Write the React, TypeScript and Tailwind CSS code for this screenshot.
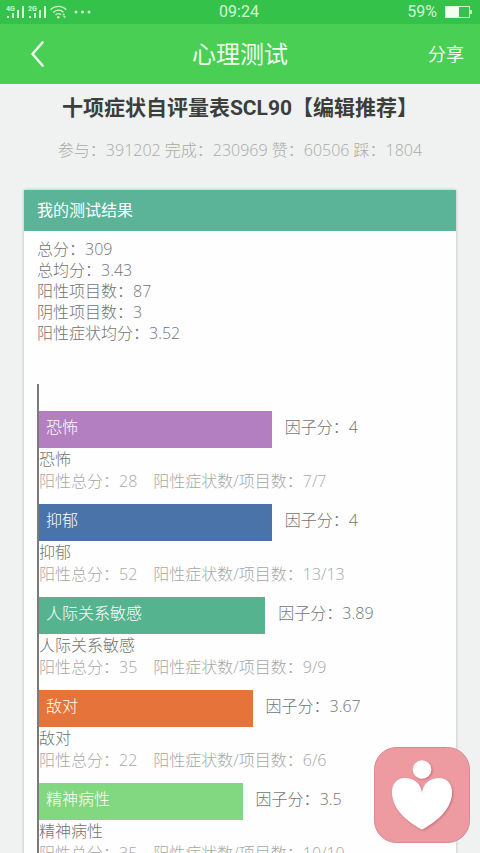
const summary = [
  { label: "总分", value: "309" },
  { label: "总均分", value: "3.43" },
  { label: "阳性项目数", value: "87" },
  { label: "阴性项目数", value: "3" },
  { label: "阳性症状均分", value: "3.52" },
];

const factors = [
  { name: "恐怖", score: 4, total: 28, ratio: "7/7", color: "bg-[#b37fc1]" },
  { name: "抑郁", score: 4, total: 52, ratio: "13/13", color: "bg-[#4a74a9]" },
  { name: "人际关系敏感", score: 3.89, total: 35, ratio: "9/9", color: "bg-[#56b38f]" },
  { name: "敌对", score: 3.67, total: 22, ratio: "6/6", color: "bg-[#e6743a]" },
  { name: "精神病性", score: 3.5, total: 35, ratio: "10/10", color: "bg-[#81d880]" },
];

// a full score of 5 fills this share of the chart, the rest is for the label
const FULL_BAR = 72;

function SignalIcon({ label }: { label: string }) {
  return (
    <svg width="19" height="14" viewBox="0 0 19 14" fill="currentColor">
      <text x="0" y="6" fontSize="7" fontWeight="700" fontFamily="Roboto, sans-serif">
        {label}
      </text>
      <rect x="1" y="11" width="2" height="2" />
      <rect x="6" y="8" width="2" height="5" />
      <rect x="11" y="5" width="2" height="8" />
      <rect x="16" y="1" width="2" height="12" />
    </svg>
  );
}

function WifiIcon() {
  return (
    <svg width="17" height="14" viewBox="0 0 17 14" fill="none" stroke="currentColor" strokeWidth="1.3">
      <path d="M0.6 4.8C4.8 0.1 12 0.1 16.2 4.8" />
      <path d="M3.2 7.5C6 4.5 10.8 4.5 13.4 7.3" />
      <path d="M5.6 10C7.2 8.2 9.4 8.2 11 9.8" />
      <circle cx="8.3" cy="12.2" r="1.2" fill="currentColor" stroke="none" />
      <path d="M12.2 10.2l1.500 -2 1.500 2zM13 11.200l1.500 2 1.500-2z" fill="currentColor" stroke="none" />
    </svg>
  );
}

function StatusBar() {
  return (
    <div className="grid h-6 shrink-0 grid-cols-[1fr_auto_1fr] items-center bg-[#34c24a] pr-2 pl-1.5 text-[#d4f7d5]">
      <div className="flex items-center gap-[3px]">
        <SignalIcon label="4G" />
        <SignalIcon label="2G" />
        <WifiIcon />
        <svg className="ml-1" width="17" height="4" viewBox="0 0 17 4" fill="currentColor">
          <circle cx="2" cy="2" r="1.5" />
          <circle cx="8.5" cy="2" r="1.5" />
          <circle cx="15" cy="2" r="1.5" />
        </svg>
      </div>
      <span className="font-[Roboto] text-base leading-6">09:24</span>
      <div className="flex items-center justify-end gap-2">
        <span className="font-[Roboto] text-base leading-6">59%</span>
        <svg width="27" height="12" viewBox="0 0 27 12">
          <rect x="0.5" y="0.5" width="24" height="11" fill="none" stroke="currentColor" />
          <rect x="1" y="1" width="13" height="10" fill="#f0fff0" />
          <rect x="25" y="4" width="2" height="4" fill="currentColor" />
        </svg>
      </div>
    </div>
  );
}

function Header() {
  return (
    <header className="grid h-[60px] shrink-0 grid-cols-[1fr_auto_1fr] items-center bg-[#49cf53] px-4 text-[#eefeee]">
      <button type="button" aria-label="返回" className="justify-self-start px-3.5 py-2">
        <svg width="16" height="28" viewBox="0 0 16 28" fill="none" stroke="currentColor" strokeWidth="2.6" strokeLinecap="round" strokeLinejoin="round">
          <path d="M12.5 2.5L2.5 14l10 11.5" />
        </svg>
      </button>
      <h1 className="text-2xl">心理测试</h1>
      <button type="button" className="justify-self-end text-lg">分享</button>
    </header>
  );
}

function FactorRow({ factor }: { factor: (typeof factors)[number] }) {
  return (
    <li className="mb-3">
      <div className="flex h-[37px] gap-[13px] leading-8">
        <div
          className={`${factor.color} shrink-0 pl-[7px] text-white`}
          style={{ width: `${(factor.score / 5) * FULL_BAR}%` }}
        >
          {factor.name}
        </div>
        <span>因子分：{factor.score}</span>
      </div>
      <p className="leading-[22px]">{factor.name}</p>
      <p className="flex gap-4 leading-[22px] text-[#a8a8a8]">
        <span>阳性总分：{factor.total}</span>
        <span>阳性症状数/项目数：{factor.ratio}</span>
      </p>
    </li>
  );
}

function HeartBadge() {
  return (
    <button type="button" aria-label="心理助手" className="fixed right-2.5 bottom-2.5">
      <svg width="96" height="96" viewBox="0 0 96 96">
        <defs>
          <filter id="soft" x="-20%" y="-20%" width="140%" height="140%">
            <feDropShadow dx="1" dy="1" stdDeviation="1.2" floodColor="#a04a55" floodOpacity="0.55" />
          </filter>
        </defs>
        <rect x="0.5" y="0.5" width="95" height="95" rx="22" fill="#ed9aa1" stroke="#d88990" />
        <g fill="#fff" filter="url(#soft)">
          <circle cx="48" cy="22.5" r="9.3" />
          <path d="M48 46C47 36 39 31 31 31C23 31 18 37 18 45C18 60 30 73 48 82.5C66 73 78 60 78 45C78 37 73 31 65 31C57 31 49 36 48 46Z" />
        </g>
      </svg>
    </button>
  );
}

export default function App() {
  return (
    <div className="flex h-screen flex-col overflow-hidden bg-[#eff2f0] font-['Open_Sans','Noto_Sans_CJK_SC',sans-serif] text-base">
      <StatusBar />
      <Header />
      <main className="flex-1 overflow-y-auto px-6 [scrollbar-width:none]">
        <h2 className="mt-2 text-center font-[Roboto,'Noto_Sans_CJK_SC',sans-serif] text-[21px] leading-8 font-bold text-[#3c3e3c]">
          十项症状自评量表SCL90【编辑推荐】
        </h2>
        <p className="mt-3.5 text-center leading-6 font-light text-[#a8aaa8]">
          参与：391202 完成：230969 赞：60506 踩：1804
        </p>

        <section className="mt-7 bg-[#fdfefd] shadow-[0_0_3px_rgba(0,0,0,0.25)]">
          <h3 className="bg-[#5bb497] px-[13px] leading-[41px] text-white">我的测试结果</h3>
          <div className="px-[13px] pt-2 leading-[21px] font-light text-[#747474]">
            {summary.map((item) => (
              <p key={item.label}>
                {item.label}：{item.value}
              </p>
            ))}
            <ul className="mt-10 border-l-2 border-[#7a7a7a] pt-[27px]">
              {factors.map((factor) => (
                <FactorRow key={factor.name} factor={factor} />
              ))}
            </ul>
          </div>
        </section>
      </main>
      <HeartBadge />
    </div>
  );
}
